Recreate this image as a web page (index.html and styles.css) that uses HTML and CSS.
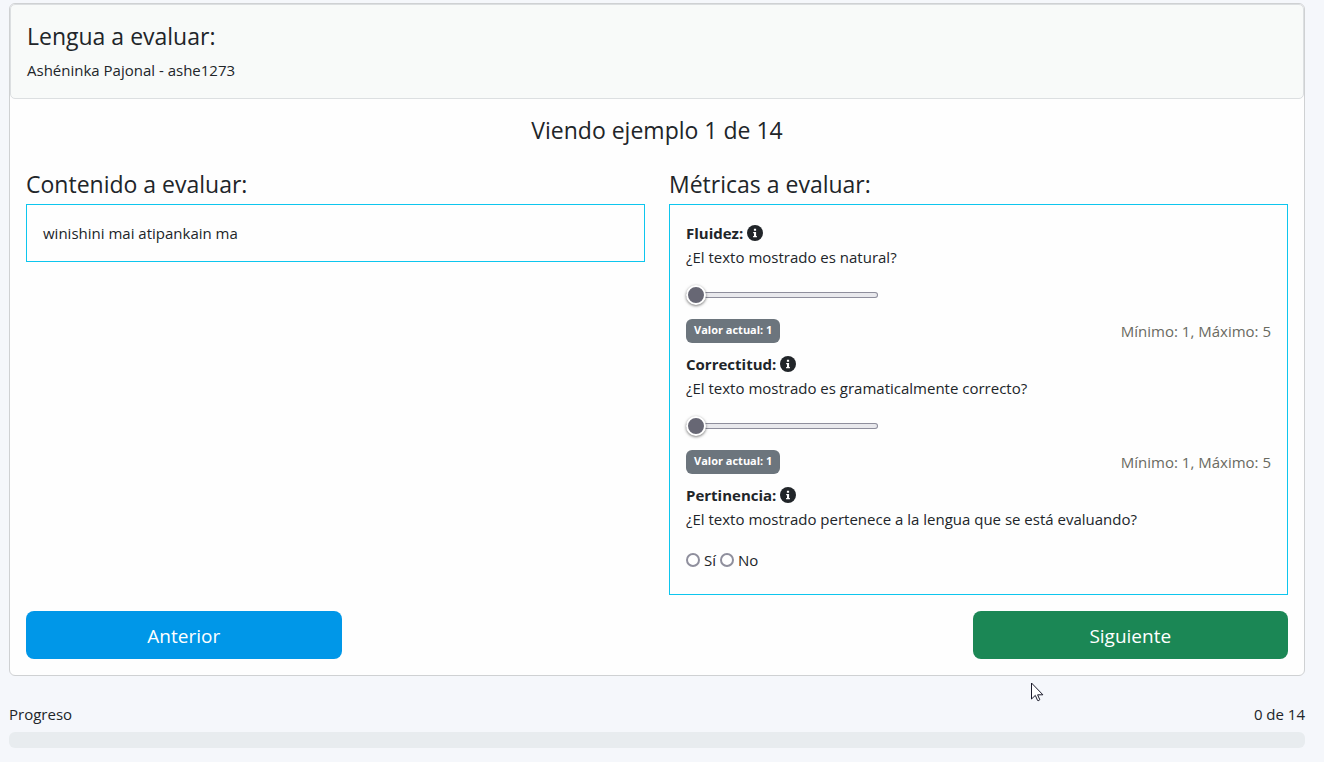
FILE: index.html
```html
<!DOCTYPE html>
<html lang="es">
<head>
<meta charset="utf-8">
<title>Evaluación de lenguas</title>
<link rel="stylesheet" href="styles.css">
</head>
<body>
<svg width="0" height="0" class="defs" aria-hidden="true">
  <symbol id="info" viewBox="0 0 16 16">
    <circle cx="8" cy="8" r="8" fill="#212529"/>
    <path d="M6.9 3.8h2.2v2H6.9zM6.2 6.9h2.9v4h.8v1.4H6.1v-1.4h.9V8.3h-.8z" fill="#fff"/>
  </symbol>
</svg>
<main class="page">
  <section class="card">
    <header class="language">
      <h2 class="title">Lengua a evaluar:</h2>
      <p class="language-name">Ashéninka Pajonal - ashe1273</p>
    </header>
    <div class="card-body">
      <h1 class="title counter">Viendo ejemplo 1 de 14</h1>
      <div class="columns">
        <section>
          <h2 class="title">Contenido a evaluar:</h2>
          <div class="panel">winishini mai atipankain ma</div>
        </section>
        <section>
          <h2 class="title">Métricas a evaluar:</h2>
          <form class="panel metrics">
            <div class="metric">
              <div class="metric-name">Fluidez: <svg class="info"><use href="#info"/></svg></div>
              <label for="fluidez">¿El texto mostrado es natural?</label>
              <input class="range" id="fluidez" type="range" min="1" max="5" value="1">
              <div class="values"><span class="badge">Valor actual: 1</span><span class="limits">Mínimo: 1, Máximo: 5</span></div>
            </div>
            <div class="metric">
              <div class="metric-name">Correctitud: <svg class="info"><use href="#info"/></svg></div>
              <label for="correctitud">¿El texto mostrado es gramaticalmente correcto?</label>
              <input class="range" id="correctitud" type="range" min="1" max="5" value="1">
              <div class="values"><span class="badge">Valor actual: 1</span><span class="limits">Mínimo: 1, Máximo: 5</span></div>
            </div>
            <div class="metric">
              <div class="metric-name">Pertinencia: <svg class="info"><use href="#info"/></svg></div>
              <div>¿El texto mostrado pertenece a la lengua que se está evaluando?</div>
              <div class="choices">
                <input class="radio" type="radio" name="pertinencia" id="si"><label for="si">Sí</label>
                <input class="radio" type="radio" name="pertinencia" id="no"><label for="no">No</label>
              </div>
            </div>
          </form>
        </section>
      </div>
      <div class="actions">
        <button class="button previous" type="button">Anterior</button>
        <button class="button next" type="button">Siguiente</button>
      </div>
    </div>
  </section>
  <div class="progress-labels"><span>Progreso</span><span>0 de 14</span></div>
  <div class="progress" role="progressbar" aria-label="Progreso" aria-valuemin="0" aria-valuemax="14" aria-valuenow="0"></div>
</main>
<svg class="pointer" width="13" height="20" viewBox="0 0 13 20" aria-hidden="true">
  <path d="M.5 1v16l3.8-3.6 2.3 5.1q1.4.5 2.2-.8l-2.2-4.9h5.3z" fill="#fff" stroke="#1b1b2b"/>
</svg>
</body>
</html>
```
FILE: styles.css
```css
* { box-sizing: border-box; }
body {
  margin: 0;
  background: #f5f7fb;
  color: #212529;
  font: 15px/24px "Open Sans", "Noto Sans", sans-serif;
}
.defs { position: absolute; }
.page { padding: 3px 19px 14px 9px; }
.card {
  background: #fefefe;
  border: 1px solid #cfd1d3;
  border-radius: 6px;
}
.language {
  padding: 16px;
  background: #f8faf9;
  border: 1px solid #dcdfe1;
  border-radius: 5px;
}
.title {
  margin: 0 0 4px;
  font-size: 23px;
  font-weight: 400;
  line-height: 31px;
}
.language .title { margin-bottom: 6px; }
.language-name { margin: 0; }
.card-body { padding: 16px; }
.counter { margin-bottom: 23px; text-align: center; }
.columns {
  display: grid;
  grid-template-columns: 1fr 1fr;
  gap: 24px;
}
.panel {
  padding: 16px;
  border: 1px solid #0dc6ee;
}
.metrics { display: grid; gap: 9px; padding-bottom: 22px; }
.metric { display: flex; flex-direction: column; }
.metric-name { display: flex; align-items: center; gap: 4px; font-weight: 700; }
.info { width: 16px; height: 16px; }
.range {
  appearance: none;
  width: 192px;
  height: 20px;
  margin: 16px 0 14px;
  background: transparent;
}
.range::-webkit-slider-runnable-track {
  height: 6px;
  background: #e9e9ed;
  border-radius: 3px;
  box-shadow: inset 0 0 0 1px #8f8f9d;
}
.range::-webkit-slider-thumb {
  appearance: none;
  width: 20px;
  height: 20px;
  margin-top: -7px;
  background: #676774;
  border: 2px solid #fff;
  border-radius: 50%;
  box-shadow: 0 1px 3px #0008;
}
.values { display: flex; justify-content: space-between; }
.badge {
  padding: 0 8px;
  background: #6c757d;
  border-radius: 6px;
  color: #fff;
  font-size: 11px;
  font-weight: 700;
  line-height: 22px;
}
.limits { color: #6a6a61; }
.choices { display: flex; align-items: center; gap: 4px; margin-top: 17px; }
.radio {
  appearance: none;
  width: 14px;
  height: 14px;
  margin: 0;
  background: #fff;
  border: 2px solid #8f8f9d;
  border-radius: 50%;
}
.radio:checked { background: #676774; }
.actions { display: flex; justify-content: space-between; margin-top: 16px; }
.button {
  width: 25%;
  padding: 10px 16px 8px;
  border: 0;
  border-radius: 8px;
  color: #fff;
  font: inherit;
  font-size: 19px;
  line-height: 30px;
}
.previous { background: #0097e8; }
.next { background: #1b8755; }
.progress-labels { display: flex; justify-content: space-between; margin: 26px 0 6px; }
.progress { height: 16px; background: #e8ecef; border-radius: 6px; }
.pointer { position: absolute; left: 1031px; top: 682px; }
```
